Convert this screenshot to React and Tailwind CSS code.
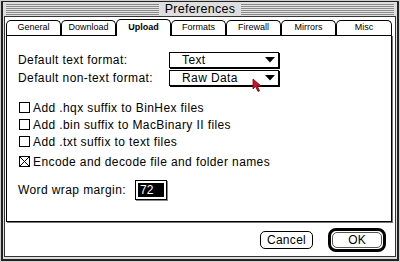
import React from 'react';

const font = { fontFamily: '"Liberation Sans", Arial, sans-serif' };

const tabs = ['General', 'Download', 'Upload', 'Formats', 'Firewall', 'Mirrors', 'Misc'];

function Tab({ label, active, last }) {
  if (active) {
    return (
      <div className="relative z-10 -mb-px flex h-[17px] w-[55px] items-center justify-center rounded-t-[5px] border border-b-0 border-black bg-white text-[9px] font-bold">
        {label}
      </div>
    );
  }
  return (
    <div
      className={`flex h-[15px] items-center justify-center rounded-t-[5px] border border-b-0 border-black bg-white text-[9px] ${last ? 'w-[56px]' : 'w-[55px]'}`}
    >
      {label}
    </div>
  );
}

function Popup({ value }) {
  return (
    <div className="flex h-[16px] w-[110px] items-center justify-between border border-black bg-white pl-[12px] pr-[3px] shadow-[1px_1px_0_#000]">
      <span className="text-[12px] tracking-[0.4px]">{value}</span>
      <svg width="10" height="6" viewBox="0 0 10 6">
        <path d="M0 0H10L5 5.5Z" fill="#000" />
      </svg>
    </div>
  );
}

function Check({ label, checked }) {
  return (
    <div className="flex h-[17px] items-center">
      <div className="relative ml-px h-[11px] w-[11px] border border-black bg-white">
        {checked && (
          <svg className="absolute inset-0" width="9" height="9" viewBox="0 0 9 9">
            <path d="M0 0L9 9M9 0L0 9" stroke="#000" strokeWidth="1" />
          </svg>
        )}
      </div>
      <span className="ml-[3px] text-[12px] tracking-[0.4px]">{label}</span>
    </div>
  );
}

const stripes = 'h-[11px] flex-1 bg-[repeating-linear-gradient(to_bottom,#8a8a8a_0px,#8a8a8a_1px,#e4e4e4_1px,#e4e4e4_2px)]';

export default function App() {
  return (
    <div className="relative h-[262px] w-[400px] bg-[#cfcfcf] p-px text-black" style={font}>
      <div className="flex h-full flex-col border-x-2 border-b-2 border-t border-[#222] bg-[#dedede]">
        {/* title bar */}
        <div className="flex h-[14px] items-center px-[3px]">
          <div className={stripes} />
          <div className="px-[6px] text-[12.5px] leading-none tracking-[0.3px]">Preferences</div>
          <div className={stripes} />
        </div>

        {/* body */}
        <div className="mx-px mb-[2px] flex flex-1 flex-col border border-[#333] bg-white px-[1px] pt-[2px]">
          {/* tabs */}
          <div className="flex items-end">
            {tabs.map((t, i) => (
              <Tab key={t} label={t} active={t === 'Upload'} last={i === tabs.length - 1} />
            ))}
          </div>

          {/* panel */}
          <div className="h-[187px] w-[386px] border border-black pl-[11px] shadow-[1px_1px_0_#777]">
            <div className="mt-[16px] flex h-[16px] items-center">
              <span className="w-[151px] text-[12px] tracking-[0.4px]">Default text format:</span>
              <Popup value="Text" />
            </div>
            <div className="mt-[2px] flex h-[16px] items-center">
              <span className="w-[151px] text-[12px] tracking-[0.4px]">Default non-text format:</span>
              <Popup value="Raw Data" />
            </div>

            <div className="mt-[13px]">
              <Check label="Add .hqx suffix to BinHex files" />
              <Check label="Add .bin suffix to MacBinary II files" />
              <Check label="Add .txt suffix to text files" />
            </div>
            <div className="mt-[3px]">
              <Check label="Encode and decode file and folder names" checked />
            </div>

            <div className="mt-[10px] flex h-[20px] items-center">
              <span className="w-[117px] text-[12px] tracking-[0.4px]">Word wrap margin:</span>
              <div className="h-[20px] w-[32px] border border-black bg-white p-[2px] shadow-[1px_1px_0_#888]">
                <div className="flex h-full items-center bg-black pl-[2px] text-[12px] leading-none text-white">72</div>
              </div>
            </div>
          </div>

          {/* buttons */}
          <div className="mt-[6px] flex items-center justify-end pr-[8px]">
            <div className="flex h-[18px] w-[53px] items-center justify-center rounded-[5px] border border-black text-[12px] tracking-[0.3px]">
              Cancel
            </div>
            <div className="ml-[15px] h-[24px] w-[58px] rounded-[8px] border-[3px] border-black p-px">
              <div className="flex h-full items-center justify-center rounded-[5px] border border-[#555] text-[12px]">
                OK
              </div>
            </div>
          </div>
        </div>
      </div>

      {/* mouse cursor */}
      <svg className="absolute left-[252px] top-[78px]" width="12" height="15" viewBox="0 0 12 15">
        <path d="M1 1L1 11L3.5 8.5L6 13.5L7.5 12.8L5.2 8L9 8Z" fill="#d0102a" stroke="#7a0010" strokeWidth="0.8" />
      </svg>
    </div>
  );
}
